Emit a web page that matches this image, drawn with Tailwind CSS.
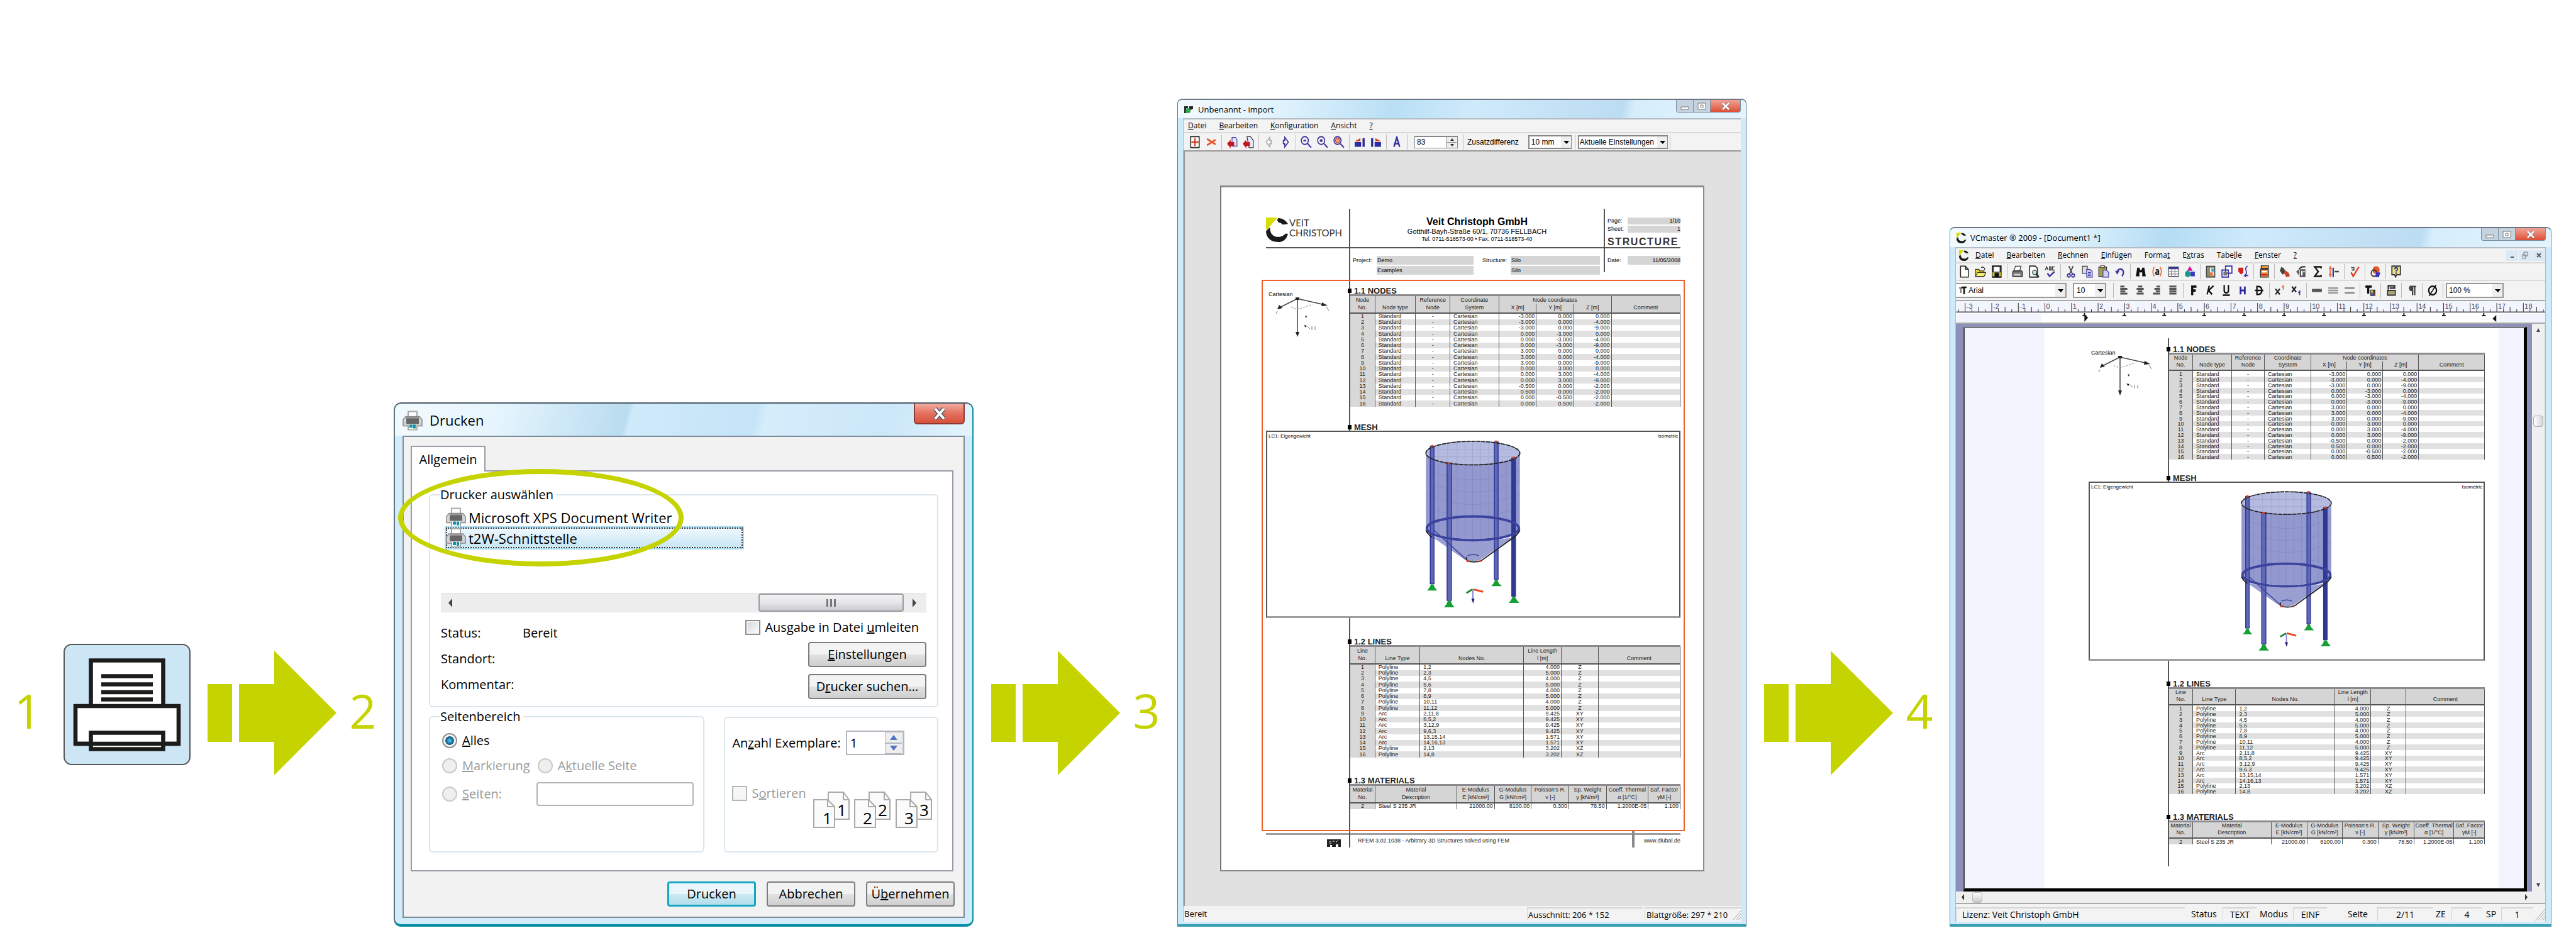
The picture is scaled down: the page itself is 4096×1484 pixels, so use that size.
<!DOCTYPE html>
<html lang="de">
<head>
  <meta charset="UTF-8" />
  <meta name="viewport" content="width=device-width, initial-scale=1.0"/>
  <title>VCmaster - Drucken über t2W-Schnittstelle</title>
  <script src="https://cdn.jsdelivr.net/npm/@tailwindcss/browser@4"></script>
</head>
<body class="bg-white text-black font-['Open_Sans','Noto_Sans',sans-serif]">

  <!-- shared symbols -->
  <svg class="hidden" aria-hidden="true">
    <symbol id="pfeil" viewBox="0 0 205 198"><path fill="#c5d300" d="M0 53h39v92H0zM50 53h56V0l99 99-99 99v-53H50z"/></symbol>
    <symbol id="drucker" viewBox="0 0 32 31">
      <path fill="#fff" stroke="#aaa" stroke-width="2" d="M9 1h14v12H9zM9 21h14v9H9z"/>
      <path fill="#d5d5d5" stroke="#888" stroke-width="1.5" d="M5 9h22l4 5v10H1V14z"/>
      <path fill="#666" d="M6 9h20v12H6z"/><path fill="#999" d="M6 9h20v3H6z"/>
      <path fill="#fff" d="M10 22h12v7H10z"/><path fill="#0e93a8" d="M11 22h5v5h-5zM17 22h4v6h-4z"/>
    </symbol>
    <symbol id="logo" viewBox="0 0 34 38">
      <path fill="#d9dc00" d="M0 0h18l-8 9L1 19H0z"/>
      <path fill="#1a1a18" d="M19 1c7 0 12 4 15 9l-8 1c-2-2-4-3-6-3l-3-4zM0 21l6-6c0 10 5 15 13 15 6 0 9-3 11-5h4c-2 9-8 13-15 13C7 38 0 31 0 21z"/>
    </symbol>
    <symbol id="silo" viewBox="0 0 662 296">
      <path fill="#6f77bd" fill-opacity=".75" d="M255 34v121a76 19 0 0 0 151 0V34a76 19 0 0 1-151 0z"/>
      <ellipse cx="330.500" cy="34" rx="75.500" ry="19" fill="#b4bae0"/>
      <path fill="none" stroke="#a3a9cf" d="M275 22v26M290 19v30M305 17v34M318 15v37M330 15v38M343 15v37M356 17v34M372 19v30M270 28h120M262 40h136"/>
      <path fill="none" stroke="#858cc4" d="M275 50v120M290 52v122M305 53v122M318 53v122M330 53v122M343 53v122M356 53v122M384 50v120M256 60q75 34 150 0M256 80q75 34 150 0M256 100q75 34 150 0M256 120q75 34 150 0"/>
      <path fill="#7f87c6" fill-opacity=".8" d="M264 168l54 38q12 4 24 0l54-37q-65 14-132-1z"/>
      <g fill="#6168b6" stroke="#2f3796" stroke-width="1.500">
        <path d="M262 23h6v221h-6zM365 16h6v221h-6z"/>
        <path d="M289 50h7v221h-7z"/><path fill="#2f3a93" d="M393 42h6v222h-6z"/>
      </g>
      <ellipse cx="330.500" cy="155" rx="74" ry="19" fill="none" stroke="#3c439f" stroke-width="4"/>
      <ellipse cx="330.500" cy="34" rx="75.500" ry="19" fill="none" stroke="#222" stroke-width="1.800" stroke-dasharray="7 1"/>
      <path fill="none" stroke="#3c439f" stroke-width="1.500" d="M268 158l24 22 28 25M322 199q9-4 18 0"/>
      <path fill="none" stroke="#222" stroke-width="1.800" d="M255 158q3 7 10 11M406 158q-3 7-12 13l-50 36q-12 4-23 0l-1-6"/>
      <path fill="#e23c1c" d="M263 21h4v3h-4zM366 14h4v3h-4zM394 40h4v3h-4zM290 49h4v3h-4zM320 206h4v3h-4zM341 206h3v3h-3z"/>
      <path fill="#17a035" d="M263 245h4l2 5 4 5h-16l4-5zM290 272h5l2 5 4 5h-17l4-5zM366 238h4l2 5 5 5h-17l4-5zM394 265h4l3 5 4 5h-17l4-5z"/>
      <path fill="none" stroke="#e8481c" stroke-width="3" d="M331 253l16 4"/><path fill="none" stroke="#178a35" stroke-width="3" d="M330 253l-10 6"/>
      <path fill="none" stroke="#8d86d6" stroke-width="2" d="M330.500 254v18"/><path fill="#1d1a6a" d="M328 268h5l-2 8z"/>
    </symbol>
    <symbol id="achsen" viewBox="0 0 100 64">
      <path fill="none" stroke="#444" stroke-width="1.500" d="M42 2v56M42 2L14 16M42 2l44 10"/>
      <path fill="#222" d="M39 0h6v4h-6zM10 19l3-7 5 5zM90 13l-9-5-1 6zM42 63l-3-8h6zM52 44l5 1-2 3zM54 30l3-1-1 4z"/>
      <path fill="none" stroke="#888" stroke-dasharray="3 2" d="M32 15q8 6 20 1t14-4"/>
      <path fill="none" stroke="#777" d="M10 22l-2 4M88 15l4 6M58 46l4 4M65 46v6M70 46v6"/>
    </symbol>

    <symbol id="i-tabelle" viewBox="0 0 16 16"><path fill="#fff" stroke="#333" stroke-width="1.500" d="M2 1h12v14H2z"/><path stroke="#d3421c" stroke-width="2" d="M8 3v10M3 8h10"/></symbol>
    <symbol id="i-schere-rot" viewBox="0 0 16 16"><path fill="none" stroke="#e4572a" stroke-width="2.500" d="M2 4l7 4 5-3M2 12l7-4 5 3"/></symbol>
    <symbol id="i-import" viewBox="0 0 16 16"><path fill="#e9e9ff" stroke="#3a35a0" d="M8 2h5l2 3v8H8z"/><path fill="#c4161c" d="M1 10l5-5v3h5v5H6v3z"/></symbol>
    <symbol id="i-import2" viewBox="0 0 16 16"><path fill="#e9e9ff" stroke="#333" d="M6 1h5l4 5v9H9z"/><path fill="#c4161c" d="M0 10l5-5v3h5v5H5v3z"/></symbol>
    <symbol id="i-zurueck" viewBox="0 0 16 16"><path fill="#fff" stroke="#aaa" stroke-width="1.500" d="M4 8l5-6v4h2v4H9v4z"/></symbol>
    <symbol id="i-vor" viewBox="0 0 16 16"><path fill="#fff" stroke="#3a35a0" stroke-width="1.500" d="M12 8L7 2v4H5v4h2v4z"/></symbol>
    <symbol id="i-lupe-minus" viewBox="0 0 16 16"><path fill="none" stroke="#3a35a0" stroke-width="1.800" d="M10 10l5 5M4 6h4"/><circle cx="6" cy="6" r="5" fill="none" stroke="#3a35a0" stroke-width="1.500"/></symbol>
    <symbol id="i-lupe-plus" viewBox="0 0 16 16"><path fill="none" stroke="#3a35a0" stroke-width="1.800" d="M10 10l5 5M4 6h4M6 4v4"/><circle cx="6" cy="6" r="5" fill="none" stroke="#3a35a0" stroke-width="1.500"/></symbol>
    <symbol id="i-lupe-rot" viewBox="0 0 16 16"><path fill="none" stroke="#3a35a0" stroke-width="1.800" d="M10 10l5 5"/><circle cx="6" cy="6" r="5" fill="none" stroke="#3a35a0" stroke-width="1.500"/><circle cx="6" cy="6" r="3" fill="#f0a080" stroke="#e4572a" stroke-width="1.500"/></symbol>
    <symbol id="i-haus1" viewBox="0 0 16 16"><path fill="#2c2ba0" d="M1 8h9v6H1zM12 3h3v11h-3z"/><path fill="#d3421c" d="M1 7l8-4v4z"/></symbol>
    <symbol id="i-haus2" viewBox="0 0 16 16"><path fill="#2c2ba0" d="M1 3h3v11H1zM6 8h9v6H6z"/><path fill="#d3421c" d="M15 7L7 3v4z"/></symbol>
    <symbol id="i-a" viewBox="0 0 16 16"><path fill="none" stroke="#2c2ba0" stroke-width="2" d="M4 14L8 2l4 12M5 10h6"/></symbol>

    <symbol id="i-neu" viewBox="0 0 16 16"><path fill="#fff" stroke="#222" stroke-width="1.300" d="M3 1h7l4 4v10H3zM10 1v4h4"/></symbol>
    <symbol id="i-oeffnen" viewBox="0 0 16 16"><path fill="#e8d52a" stroke="#333" d="M1 5h5l1 2h6v7H1z"/><path fill="#f6ef6a" stroke="#333" d="M4 9h12l-3 5H1z"/><path fill="none" stroke="#222" d="M9 3q3-2 5 1v2"/></symbol>
    <symbol id="i-speichern" viewBox="0 0 16 16"><path fill="#555" stroke="#111" stroke-width="1.500" d="M2 1h12v14H2z"/><path fill="#fff" d="M4 2h8v6H4z"/><path fill="#c9c52a" d="M2 9h3v5H2zM11 9h3v5h-3z"/><path fill="#111" d="M5 10h6v5H5z"/></symbol>
    <symbol id="i-drucken" viewBox="0 0 16 16"><path fill="#fff" stroke="#333" d="M5 1h8l-2 6H3z"/><path fill="#777" stroke="#222" d="M2 7h12l1 2v5H1V9z"/><path fill="#ddd" d="M3 11h9v2H3z"/></symbol>
    <symbol id="i-vorschau" viewBox="0 0 16 16"><path fill="#fff" stroke="#333" stroke-width="1.500" d="M2 1h8l3 3v11H2z"/><circle cx="9" cy="9" r="3" fill="#bfe6e6" stroke="#333"/><path stroke="#222" stroke-width="2" d="M11 11l4 4"/></symbol>
    <symbol id="i-abc" viewBox="0 0 16 16"><path fill="none" stroke="#333" stroke-width="1.300" d="M1 6l2-4 2 4M7 2v4h2V2zM14 2h-3v4h3"/><path fill="none" stroke="#3a35a0" stroke-width="2" d="M4 10l3 4 7-6"/></symbol>
    <symbol id="i-schere" viewBox="0 0 16 16"><path fill="none" stroke="#444" stroke-width="1.500" d="M5 1l5 10M11 1L6 11"/><circle cx="5" cy="13" r="2" fill="none" stroke="#3a35a0" stroke-width="1.500"/><circle cx="11" cy="13" r="2" fill="none" stroke="#3a35a0" stroke-width="1.500"/></symbol>
    <symbol id="i-kopieren" viewBox="0 0 16 16"><path fill="#ddd" stroke="#333" d="M1 1h7v9H1z"/><path fill="#cfd0f5" stroke="#3a35a0" d="M7 5h5l3 3v7H7z"/><path stroke="#3a35a0" d="M9 9h4M9 11h4M9 13h4"/></symbol>
    <symbol id="i-einfuegen" viewBox="0 0 16 16"><path fill="#a9a14a" stroke="#333" d="M1 2h11v12H1z"/><path fill="#eee" stroke="#333" d="M4 0h5v3H4z"/><path fill="#cfd0f5" stroke="#3a35a0" d="M7 6h5l3 3v6H7z"/></symbol>
    <symbol id="i-undo" viewBox="0 0 16 16"><path fill="none" stroke="#3a35a0" stroke-width="2" d="M4 9q1-5 6-4 5 2 1 9"/><path fill="#3a35a0" d="M1 7h6l-3 5z"/></symbol>
    <symbol id="i-fernglas" viewBox="0 0 16 16"><path fill="#111" d="M3 3h3l1 3h2l1-3h3l2 11h-5V9H6v5H1z"/></symbol>
    <symbol id="i-a-klammer" viewBox="0 0 16 16"><path fill="none" stroke="#e8703a" stroke-width="1.500" d="M4 2q-4 6 0 12M12 2q4 6 0 12"/><path fill="none" stroke="#222" stroke-width="1.800" d="M6 6q4-1 4 1v5M10 8q-4 0-4 2t4 1"/></symbol>
    <symbol id="i-gitter" viewBox="0 0 16 16"><path fill="#fff" stroke="#444" d="M1 2h14v12H1z"/><path fill="#3a3a90" d="M1 2h14v3H1z"/><path stroke="#888" d="M5 5v9M10 5v9M1 8h14M1 11h14"/></symbol>
    <symbol id="i-formen" viewBox="0 0 16 16"><path fill="#d6129a" d="M8 1l4 6H4z"/><circle cx="5" cy="11" r="4" fill="#169a8a"/><path fill="#3a35c0" d="M9 8h6v6H9z"/></symbol>
    <symbol id="i-rahmen" viewBox="0 0 16 16"><path fill="#8a8a6a" stroke="#333" d="M2 1h12v14H2z"/><path fill="#eee" d="M7 3h6v10H7z"/><path fill="#38b4c4" d="M9 4h4v4H9z"/><path fill="#e8703a" d="M7 9h4v4H7z"/></symbol>
    <symbol id="i-fenster" viewBox="0 0 16 16"><path fill="#fff" stroke="#3a35a0" stroke-width="1.500" d="M6 1h9v9H6zM1 6h9v9H1z"/><path fill="#777" d="M3 8h5v5H3z"/></symbol>
    <symbol id="i-herz" viewBox="0 0 16 16"><path fill="#d3201c" d="M1 3h7v6l-3 3-4-4z"/><path fill="none" stroke="#3a35a0" stroke-width="1.500" d="M14 1q-4 2-2 6 2 3-2 6h5M11 11v4"/></symbol>
    <symbol id="i-rechner" viewBox="0 0 16 16"><path fill="#e8943a" stroke="#333" stroke-width="1.300" d="M4 0h10v4H4zM3 5h11v10H3z"/><path fill="#fff" d="M5 7h7v2H5z"/><path stroke="#d3201c" stroke-width="2" d="M4 12h9"/></symbol>
    <symbol id="i-pinsel" viewBox="0 0 16 16"><path fill="#444" d="M3 2l4 2 2 5-4 3-4-5z"/><path fill="#c4452a" d="M8 6l6 4 1 4-5 1-3-5z"/></symbol>
    <symbol id="i-stapel" viewBox="0 0 16 16"><path fill="#555" d="M1 8l4-3v8zM6 5h8v10H6z"/><path fill="#fff" d="M8 7h2v6H8zM11 7h2v2h-2z"/><path fill="none" stroke="#222" stroke-width="1.500" d="M5 5q3-4 9-3"/></symbol>
    <symbol id="i-summe" viewBox="0 0 16 16"><path fill="none" stroke="#111" stroke-width="2" d="M13 4V2H4l5 6-5 6h9v-2"/></symbol>
    <symbol id="i-wurzel" viewBox="0 0 16 16"><path stroke="#e8703a" stroke-width="2" d="M3 1v14M1 4h4M1 12h4"/><path stroke="#3a35a0" stroke-width="2" d="M7 3v12"/><path stroke="#444" stroke-width="2" d="M9 8h6"/></symbol>
    <symbol id="i-haken" viewBox="0 0 16 16"><path fill="none" stroke="#e23c1c" stroke-width="2" d="M3 9l3 5 8-12"/><path fill="none" stroke="#555" stroke-width="1.500" d="M3 3h4v3H4"/></symbol>
    <symbol id="i-kugel" viewBox="0 0 16 16"><circle cx="9" cy="6" r="5" fill="#e8562a"/><circle cx="6" cy="10" r="4" fill="none" stroke="#333" stroke-width="1.500"/><path fill="#3a35c0" d="M9 9h6l-2 6H8z"/></symbol>
    <symbol id="i-hilfe" viewBox="0 0 16 16"><path fill="#e6df7a" stroke="#333" stroke-width="1.500" d="M2 1h12v11H9l-2 3-1-3H2z"/><path fill="none" stroke="#2c2ba0" stroke-width="1.500" d="M6 5q0-2 2-2t2 2q0 1-2 2v1M8 9v2"/></symbol>

    <symbol id="i-links" viewBox="0 0 16 16"><path stroke="#555" stroke-width="2.500" d="M3 3h6M3 6h10M3 9h7M3 12h10"/></symbol>
    <symbol id="i-mitte" viewBox="0 0 16 16"><path stroke="#555" stroke-width="2.500" d="M5 3h6M3 6h10M5 9h6M3 12h10"/></symbol>
    <symbol id="i-rechts" viewBox="0 0 16 16"><path stroke="#555" stroke-width="2.500" d="M8 3h5M5 6h8M7 9h6M3 12h10"/></symbol>
    <symbol id="i-block" viewBox="0 0 16 16"><path stroke="#555" stroke-width="2.500" d="M3 3h10M3 6h10M3 9h10M3 12h10"/></symbol>
    <symbol id="i-fett" viewBox="0 0 16 16"><path fill="none" stroke="#111" stroke-width="3" d="M6 14V3h6M6 8h5"/></symbol>
    <symbol id="i-kursiv" viewBox="0 0 16 16"><path fill="none" stroke="#111" stroke-width="2" d="M7 2L4 13M13 2L6 8l5 5"/></symbol>
    <symbol id="i-unter" viewBox="0 0 16 16"><path fill="none" stroke="#111" stroke-width="2" d="M5 1v7q0 3 3 3t3-3V1M3 14h10"/></symbol>
    <symbol id="i-h" viewBox="0 0 16 16"><path fill="none" stroke="#2c2ba0" stroke-width="2.500" d="M5 3v10M11 3v10M5 8h6"/></symbol>
    <symbol id="i-durch" viewBox="0 0 16 16"><path fill="none" stroke="#111" stroke-width="2" d="M5 3v10h3q4-1 4-5T8 3zM2 8h12"/></symbol>
    <symbol id="i-hoch" viewBox="0 0 16 16"><path stroke="#222" stroke-width="2" d="M2 6l6 7M8 6l-6 7"/><path fill="none" stroke="#e8703a" stroke-width="1.500" d="M11 4l2-2v5"/></symbol>
    <symbol id="i-tief" viewBox="0 0 16 16"><path stroke="#222" stroke-width="2" d="M2 3l6 7M8 3l-6 7"/><path fill="none" stroke="#3a35a0" stroke-width="1.500" d="M11 11l2-2v5"/></symbol>
    <symbol id="i-linie1" viewBox="0 0 16 16"><path stroke="#555" stroke-width="4" d="M1 8h14"/></symbol>
    <symbol id="i-linie2" viewBox="0 0 16 16"><path stroke="#999" stroke-width="2" d="M1 5h14M1 8h14M1 11h14"/></symbol>
    <symbol id="i-linie3" viewBox="0 0 16 16"><path stroke="#888" stroke-width="2" d="M1 5h14M1 11h14"/></symbol>
    <symbol id="i-farbe" viewBox="0 0 16 16"><path fill="none" stroke="#111" stroke-width="3" d="M1 3h9M5 3v9"/><path fill="#333" d="M8 7h7v8H8z"/><path fill="#e8c52a" d="M9 8h3v3H9z"/><path fill="#d3201c" d="M12 11h2v3h-2z"/><path fill="#2a6ad0" d="M9 11h3v3H9z"/></symbol>
    <symbol id="i-ordner" viewBox="0 0 16 16"><path fill="#a9a47a" stroke="#333" stroke-width="1.500" d="M3 8h11v6H3z"/><path fill="none" stroke="#333" stroke-width="2" d="M4 7V2h9v4M6 5h7"/></symbol>
    <symbol id="i-absatz" viewBox="0 0 16 16"><path fill="#444" d="M8 2h6v2h-1v10h-2V4h-1v10H8V9Q4 9 4 5t4-3z"/></symbol>
    <symbol id="i-leer" viewBox="0 0 16 16"><circle cx="8" cy="8" r="5.500" fill="none" stroke="#111" stroke-width="2"/><path stroke="#111" stroke-width="1.500" d="M3 15L13 1"/></symbol>
  </svg>

  <main class="min-h-screen flex items-end pl-[22px] pr-[39px] pb-[10px]">

    <!-- Schritt 1 -->
    <p class="w-11 shrink-0 mb-[304px] text-center text-[75px] leading-[80px] text-[#c5d300]">1</p>
    <svg class="ml-[35px] mb-[257px] w-[202px] h-[193px] shrink-0" viewBox="0 0 202 193" role="img" aria-label="Drucker">
      <rect x="1" y="1" width="200" height="191" rx="12" fill="#cde6f5" stroke="#575756" stroke-width="2"/>
      <g fill="#fff" stroke="#1c1c1a" stroke-width="6.600">
        <path d="M43.500 26.500h115v90h-115z"/>
        <path d="M19 99h164v60H19z"/>
        <path d="M43.500 141.500h115v26h-115z"/>
        <path fill="none" d="M19 159h164"/>
        <path d="M60 51.500h82M60 64.500h82M60 77h82M60 88.500h82"/>
      </g>
    </svg>
    <svg class="ml-[27px] mb-[241px] w-[205px] h-[198px] shrink-0"><use href="#pfeil"/></svg>

    <!-- Schritt 2: Druckdialog -->
    <p class="w-11 shrink-0 ml-5 mr-[27px] mb-[304px] text-center text-[75px] leading-[80px] text-[#c5d300]">2</p>
    <section class="relative flex-[1_1_922px] rounded-xl border-2 border-t-[#4a5a68] border-l-[#5d7484] border-r-[#0e8fa6] border-b-4 border-b-[#0a8ea6] bg-[#d3ecfb] px-3 pb-[10px] text-[20px] leading-[30px]">
      <header class="-mx-3 h-[51px] rounded-t-[10px] flex items-start bg-[linear-gradient(105deg,#f2fafe_0%,#e6f5fd_18%,#b9dcf0_40%,#cfeafb_41%,#c5e4f7_62%,#d6edfb_64%,#cbe7f8_85%,#e4f4fd_100%)]">
        <svg class="w-8 h-8 ml-3 mt-[11px]"><use href="#drucker"/></svg>
        <h2 class="ml-[11px] mt-[11px] text-[22px]">Drucken</h2>
        <button aria-label="Schließen" class="ml-auto mr-3 w-[81px] h-[33px] rounded-b-md border-2 border-t-0 border-[#8b3a34] flex items-center justify-center bg-linear-to-b from-[#f3aba0] via-[#e2715f] to-[#d8503a]">
          <svg class="w-6 h-5" viewBox="0 0 24 20"><path stroke="#555a66" stroke-width="7" d="M5 2l14 16M19 2L5 18"/><path stroke="#fff" stroke-width="4" d="M5 2l14 16M19 2L5 18"/></svg>
        </button>
      </header>
      <div class="border-2 border-[#7d8b98] bg-[#f2f2f2] pt-[14px] pl-[11px] pr-[14px] pb-4">
        <div class="flex"><button role="tab" class="relative -mb-[2px] w-[119px] h-[41px] bg-white border-2 border-b-0 border-[#999ca6] text-[20px]">Allgemein</button></div>
        <form class="mr-[2px] bg-white border-2 border-[#999ca6] pt-[22px] pl-[27px] pr-[22px] pb-[28px]" onsubmit="return false">
          <fieldset class="rounded-md border-2 border-[#dbe6ec] px-[17px] pb-[11px]">
            <legend class="-ml-[1px] px-0 pr-1">Drucker auswählen</legend>
            <ul class="h-[141px] pt-[5px] pl-2 text-[22px]">
              <li class="flex items-center h-[32px]"><svg class="w-8 h-8"><use href="#drucker"/></svg><span class="ml-1">Microsoft XPS Document Writer</span></li>
              <li class="flex items-center h-[33px] w-[472px] border-2 border-dotted border-[#333] outline-2 outline-[#a8dcf0] bg-linear-to-b from-[#eef7fd] to-[#c9e6f5]"><svg class="w-8 h-[31px] -ml-[2px]"><use href="#drucker"/></svg><span class="ml-1">t2W-Schnittstelle</span></li>
            </ul>
            <div class="h-[31px] flex items-center bg-[#ededed] border-y border-[#e0e0e0]">
              <svg class="w-3 h-4 ml-2" viewBox="0 0 12 16"><path fill="#444" d="M10 1v14L4 8z"/></svg>
              <div class="ml-auto w-[231px] h-[29px] rounded-sm border-2 border-[#999ba0] bg-linear-to-b from-[#f3f3f3] via-[#e6e6e9] to-[#c9cbd1] flex items-center justify-center gap-[3px]">
                <i class="w-[3px] h-3 bg-[#777]"></i><i class="w-[3px] h-3 bg-[#777]"></i><i class="w-[3px] h-3 bg-[#777]"></i>
              </div>
              <svg class="w-3 h-4 mx-3" viewBox="0 0 12 16"><path fill="#444" d="M2 1v14l6-7z"/></svg>
            </div>
            <div class="mt-3 flex justify-between">
              <dl class="grid grid-cols-[130px_1fr] auto-rows-[41px] leading-[41px]">
                <dt>Status:</dt><dd>Bereit</dd>
                <dt>Standort:</dt><dd></dd>
                <dt>Kommentar:</dt><dd></dd>
              </dl>
              <div class="flex flex-col items-end gap-[11px]">
                <label class="mr-3 h-6 flex items-center gap-[7px]"><input type="checkbox" class="appearance-none w-6 h-6 border-2 border-[#8e8f8f] bg-linear-to-br from-[#cdd3da] to-white shadow-[inset_0_0_0_2px_#f4f4f4]"><span>Ausgabe in Datei <u>u</u>mleiten</span></label>
                <button class="w-[188px] h-10 rounded border-2 border-[#7d7d7d] bg-linear-to-b from-[#f3f3f3] from-50% via-[#e2e2e2] via-50% to-[#cfcfcf]"><u>E</u>instellungen</button>
                <button class="w-[188px] h-10 rounded border-2 border-[#7d7d7d] bg-linear-to-b from-[#f3f3f3] from-50% via-[#e2e2e2] via-50% to-[#cfcfcf]">D<u>r</u>ucker suchen...</button>
              </div>
            </div>
          </fieldset>

          <div class="flex items-start gap-[31px]">
            <fieldset class="flex-[435_1_0%] h-[231px] rounded-md border-2 border-[#dbe6ec] pl-[19px] pr-[15px] pt-2">
              <legend class="-ml-[3px] pr-1">Seitenbereich</legend>
              <label class="flex items-center gap-2 h-[30px]"><input type="radio" name="bereich" checked class="appearance-none w-6 h-6 rounded-full border-2 border-[#8e8f8f] bg-[radial-gradient(circle,#3db5dd_12%,#0b5578_45%,#f4f4f4_52%)]"><span><u>A</u>lles</span></label>
              <div class="mt-[10px] flex gap-3 text-[#9a9a9a]">
                <label class="flex items-center gap-2 h-[30px]"><input type="radio" name="bereich" disabled class="appearance-none w-6 h-6 rounded-full border-2 border-[#c9c9c9] bg-[#efefef]"><span><u>M</u>arkierung</span></label>
                <label class="flex items-center gap-2 h-[30px]"><input type="radio" name="bereich" disabled class="appearance-none w-6 h-6 rounded-full border-2 border-[#c9c9c9] bg-[#efefef]"><span>A<u>k</u>tuelle Seite</span></label>
              </div>
              <div class="mt-[11px] flex items-center text-[#9a9a9a]">
                <label class="flex items-center gap-2"><input type="radio" name="bereich" disabled class="appearance-none w-6 h-6 rounded-full border-2 border-[#c9c9c9] bg-[#efefef]"><span><u>S</u>eiten:</span></label>
                <input type="text" aria-label="Seiten" class="ml-auto w-[250px] h-[38px] rounded-sm border-2 border-[#b4b4b4] bg-white">
              </div>
            </fieldset>
            <fieldset class="mt-[15px] flex-[345_1_0%] h-[216px] rounded-md border-2 border-[#dbe6ec] pl-[11px] pr-2 pt-5">
              <div class="flex items-center h-[39px]">
                <label for="anzahl">An<u>z</u>ahl Exemplare:</label>
                <div class="ml-2 w-[93px] h-[39px] flex border-2 border-[#b4b7be]">
                  <input id="anzahl" type="text" value="1" class="w-[60px] pl-[5px]">
                  <span class="w-7 flex flex-col bg-[#b4b7be] gap-[2px] p-[1px]">
                    <button aria-label="Mehr" class="flex-1 bg-[#eee] flex items-center justify-center"><svg class="w-3 h-2" viewBox="0 0 12 8"><path fill="#4d73c4" d="M6 0l6 8H0z"/></svg></button>
                    <button aria-label="Weniger" class="flex-1 bg-[#eee] flex items-center justify-center"><svg class="w-3 h-2" viewBox="0 0 12 8"><path fill="#4d73c4" d="M6 8L0 0h12z"/></svg></button>
                  </span>
                </div>
              </div>
              <div class="mt-[46px] flex items-start">
                <label class="flex items-center gap-[7px] text-[#9a9a9a]"><input type="checkbox" disabled class="appearance-none w-6 h-6 border-2 border-[#b6b6b6] bg-[#f6f6f6]"><span>S<u>o</u>rtieren</span></label>
                <svg class="mt-3 ml-auto w-[189px] h-[68px]" viewBox="0 0 189 68" font-size="26">
                  <g id="blatt" fill="#fbfbfb" stroke="#aaa" stroke-width="2"><path d="M24 1h24l9 12v31H24z"/><path d="M1 13h22l11 11v33H1z"/><path fill="none" d="M48 1v12h9M23 13v11h11"/></g>
                  <use href="#blatt" x="65"/><use href="#blatt" x="131"/>
                  <text x="15" y="52">1</text><text x="38" y="39">1</text>
                  <text x="79" y="52">2</text><text x="103" y="39">2</text>
                  <text x="145" y="52">3</text><text x="169" y="39">3</text>
                </svg>
              </div>
            </fieldset>
          </div>
        </form>
        <div class="mt-4 flex justify-end gap-[17px]">
          <button class="w-[141px] h-10 rounded border-[3px] border-[#12a5c4] bg-linear-to-b from-[#eaf6fb] from-50% via-[#cdeaf4] via-50% to-[#b2deec]">Drucken</button>
          <button class="w-[141px] h-10 rounded border-2 border-[#7d7d7d] bg-linear-to-b from-[#f3f3f3] from-50% via-[#e2e2e2] via-50% to-[#cfcfcf]">Abbrechen</button>
          <button class="w-[141px] h-10 rounded border-2 border-[#7d7d7d] bg-linear-to-b from-[#f3f3f3] from-50% via-[#e2e2e2] via-50% to-[#cfcfcf]">Ü<u>b</u>ernehmen</button>
        </div>
      </div>
      <!-- Markierung -->
      <div class="absolute left-[5px] top-[104px] w-[454px] h-[155px] rounded-[50%] border-8 border-[#c5d300]"></div>
    </section>
    <svg class="ml-7 mb-[241px] w-[205px] h-[198px] shrink-0"><use href="#pfeil"/></svg>

    <!-- Schritt 3: Importfenster -->
    <p class="w-11 shrink-0 ml-5 mr-[27px] mb-[304px] text-center text-[75px] leading-[80px] text-[#c5d300]">3</p>
    <section class="flex-[1_1_905px] rounded-t-lg border border-t-2 border-[#5d7484] border-t-[#6b7681] border-b-4 border-b-[#3b9fb2] bg-[#cfeafb] px-2 pb-1 text-[13px]">
      <header class="-mx-2 h-[29px] flex items-center rounded-t-md bg-[linear-gradient(105deg,#f2fafe_0%,#e0f3fd_18%,#b9dff5_38%,#cfeafb_52%,#bcdcf2_78%,#d6edfb_80%,#e4f4fd_100%)]">
        <svg class="ml-[9px] w-4 h-4" viewBox="0 0 16 16"><path fill="#222" d="M1 3h6v3H4v8H1zM9 3h6v4l-4 2H9z"/><circle cx="7" cy="10" r="4" fill="#2fa84a"/></svg>
        <h2 class="ml-[7px] leading-5">Unbenannt - import</h2>
        <div class="ml-auto mr-2 self-start flex h-5 w-[103px] rounded-b border border-t-0 border-[#7d8ea0] overflow-hidden">
          <button aria-label="Minimieren" class="flex-1 bg-[#c4d3df] border-r border-[#7d8ea0] flex items-center justify-center"><svg class="w-4 h-3" viewBox="0 0 16 12"><path fill="#fff" stroke="#777" d="M2 7h12v4H2z"/></svg></button>
          <button aria-label="Maximieren" class="flex-1 bg-[#c4d3df] border-r border-[#7d8ea0] flex items-center justify-center"><svg class="w-4 h-3" viewBox="0 0 16 12"><path fill="#fff" stroke="#777" d="M2 1h12v10H2zM6 4h4v4H6z"/></svg></button>
          <button aria-label="Schließen" class="w-[47px] bg-linear-to-b from-[#f0a295] to-[#dd4c34] flex items-center justify-center"><svg class="w-4 h-3" viewBox="0 0 16 12"><path stroke="#777" stroke-width="4" d="M3 1l10 10M13 1L3 11"/><path stroke="#fff" stroke-width="2.500" d="M3 1l10 10M13 1L3 11"/></svg></button>
        </div>
      </header>
      <div class="border-t-2 border-l border-[#b3bcc4] bg-[#f3f3f3]">
        <nav class="h-[22px] pl-[7px] flex items-center gap-5 text-[12px] border-b-2 border-[#dadada]">
          <a href="#"><u>D</u>atei</a><a href="#"><u>B</u>earbeiten</a><a href="#"><u>K</u>onfiguration</a><a href="#"><u>A</u>nsicht</a><a href="#"><u>?</u></a>
        </nav>
        <div class="h-[27px] pl-[5px] flex items-center font-['Liberation_Sans',sans-serif] text-[12px]">
          <div id="leiste-import" class="flex items-center"></div>
          <div class="ml-2 w-[69px] h-5 flex border border-t-2 border-[#888] bg-white">
            <input type="text" value="83" aria-label="Zoom" class="w-[50px] pl-[3px]">
            <span class="w-4 flex flex-col gap-[1px] bg-[#888] border-l border-[#888]"><button aria-label="Größer" class="flex-1 bg-[#eee] flex items-center justify-center"><svg class="w-2 h-1" viewBox="0 0 8 4"><path fill="#333" d="M4 0l3 4H1z"/></svg></button><button aria-label="Kleiner" class="flex-1 bg-[#eee] flex items-center justify-center"><svg class="w-2 h-1" viewBox="0 0 8 4"><path fill="#333" d="M4 4L1 0h6z"/></svg></button></span>
          </div>
          <i class="ml-2 w-px h-6 bg-[#bbb]"></i>
          <label for="differenz" class="ml-[6px]">Zusatzdifferenz</label>
          <div class="relative ml-[15px]">
            <select id="differenz" class="appearance-none block w-[69px] h-[22px] pl-[3px] border-2 border-r border-[#888] bg-white"><option>10 mm</option></select>
            <svg class="absolute right-[1px] top-[2px] w-4 h-[18px] bg-[#eee] pointer-events-none" viewBox="0 0 16 18"><path fill="#000" d="M4 7h9l-4 5z"/></svg>
          </div>
          <i class="ml-[5px] w-px h-6 bg-[#bbb]"></i>
          <div class="relative ml-1">
            <select aria-label="Einstellungen" class="appearance-none block w-[143px] h-[22px] pl-[1px] border-2 border-r border-[#888] bg-white"><option>Aktuelle Einstellungen</option></select>
            <svg class="absolute right-[1px] top-[2px] w-4 h-[18px] bg-[#eee] pointer-events-none" viewBox="0 0 16 18"><path fill="#000" d="M4 7h9l-4 5z"/></svg>
          </div>
          <i class="ml-[3px] w-px h-6 bg-[#bbb]"></i>
        </div>
        <div class="border-t-2 border-l-2 border-[#989898] bg-[#e1e1e1] pt-[54px] pb-[55px] pl-[56px] pr-[58px]">
          <article class="bg-white border-2 border-t-[3px] border-[#8a8a8c] border-l-[#777] pt-[34px] pb-[36px] pl-[71px] pr-[36px] font-['Liberation_Sans',sans-serif]">
            <div class="h-[63px] border-b-2 border-[#555] grid grid-cols-[132px_1fr_122px]">
              <div class="pt-[14px] flex gap-[2px]">
                <svg class="w-[35px] h-[39px]"><use href="#logo"/></svg>
                <p class="font-['Lato',sans-serif] text-[15px] leading-[16px] text-[#333]">VEIT<br>CHRISTOPH</p>
              </div>
              <div class="border-l-2 border-[#555] pt-[12px] text-center">
                <h3 class="font-bold text-[16px] leading-[18px]">Veit Christoph GmbH</h3>
                <p class="text-[11px] leading-[13px]">Gotthilf-Bayh-Straße 60/1, 70736 FELLBACH</p>
                <p class="text-[9px] leading-[11px]">Tel: 0711-518573-00 • Fax: 0711-518573-40</p>
              </div>
              <div class="border-l-2 border-[#555] pt-[14px] pl-1 text-[9px]">
                <div class="flex justify-between leading-[11px]">Page: <span class="w-[84px] bg-[#d5d5d5] text-right">1/10</span></div>
                <div class="mt-[2px] flex justify-between leading-[11px]">Sheet: <span class="w-[84px] bg-[#d5d5d5] text-right">1</span></div>
                <p class="mt-[5px] text-[16px] leading-[20px] font-bold tracking-widest text-[#333]">STRUCTURE</p>
              </div>
            </div>
            <div class="h-[50px] grid grid-cols-[132px_1fr_122px] text-[9px] leading-[14px]">
              <div></div>
              <div class="border-l-2 border-[#555] pt-[12px] pl-1 pr-[6px] flex">
                <span class="w-[38px]">Project:</span>
                <div class="w-[154px]"><p class="bg-[#d5d5d5] pl-px">Demo</p><p class="mt-[2px] bg-[#d5d5d5] pl-px">Examples</p></div>
                <span class="ml-[14px] w-[45px]">Structure:</span>
                <div class="flex-1"><p class="bg-[#d5d5d5] pl-px">Silo</p><p class="mt-[2px] bg-[#d5d5d5] pl-px">Silo</p></div>
              </div>
              <div class="border-l-2 border-[#555] h-[38px] pt-[12px] pl-1 flex justify-between">Date: <span class="w-[84px] h-[14px] bg-[#d5d5d5] text-right">11/05/2008</span></div>
            </div>
            <div class="-mx-[7px] border-2 border-[#e9632b] px-[5px]">
              <div id="bericht-import"></div>
            </div>
            <div class="flex h-[26px] text-[9px] text-[#222]">
              <div class="w-[132px]"><div class="mt-[3px] h-[3px] bg-[#a09da0]"></div><svg class="ml-[97px] mt-[7px] w-[22px] h-3" viewBox="0 0 22 12"><path fill="#222" d="M0 0h22v12h-4V8h-4v4H8V9H5v3H0z"/><path stroke="#fff" d="M3 4h4M9 3h3M14 5l3-3M4 7h3"/></svg></div>
              <div class="flex-1 border-l-2 border-[#555]"><div class="mt-[3px] h-[3px] bg-[#a09da0]"></div><p class="ml-3 mt-1 leading-[11px]">RFEM 3.02.1038 - Arbitrary 3D Structures solved using FEM</p></div>
              <div class="w-[77px] border-l-4 border-[#8a8a8a]"><div class="mt-[3px] h-[3px] bg-[#a09da0]"></div><p class="mt-1 text-right leading-[11px]">www.dlubal.de</p></div>
            </div>
          </article>
        </div>
        <footer class="h-[25px] flex items-center">
          <span class="pl-px flex-1">Bereit</span>
          <span class="w-[184px] h-[21px] leading-5 border-t-2 border-l border-[#d5d5d5] pl-px">Ausschnitt: 206 * 152</span>
          <span class="ml-[3px] w-[153px] h-[21px] leading-5 border-t-2 border-l border-[#d5d5d5] pl-[2px] flex items-center">Blattgröße: 297 * 210<svg class="ml-auto w-3 h-4" viewBox="0 0 12 16"><path stroke="#aaa" d="M0 16L12 2M4 16l8-9M8 16l4-4"/></svg></span>
        </footer>
      </div>
    </section>
    <svg class="ml-7 mb-[241px] w-[205px] h-[198px] shrink-0"><use href="#pfeil"/></svg>

    <!-- Schritt 4: VCmaster -->
    <p class="w-11 shrink-0 ml-5 mr-[26px] mb-[304px] text-center text-[75px] leading-[80px] text-[#c5d300]">4</p>
    <section class="flex-[1_1_957px] rounded-t-lg border border-t-2 border-[#3f9cb2] border-t-[#6b7681] border-b-4 border-b-[#3b9fb2] bg-[#cfeafb] px-2 pb-1 text-[13px]">
      <header class="-mx-2 h-[30px] flex items-center rounded-t-md bg-[linear-gradient(105deg,#f2fafe_0%,#e0f3fd_20%,#b4dcf4_36%,#cfeafb_50%,#bcdcf2_78%,#d6edfb_80%,#e4f4fd_100%)]">
        <svg class="ml-[9px] w-[17px] h-[17px]"><use href="#logo"/></svg>
        <h2 class="ml-[6px] leading-5">VCmaster ® 2009 - [Document1 *]</h2>
        <div class="ml-auto mr-2 self-start flex h-5 w-[103px] rounded-b border border-t-0 border-[#7d8ea0] overflow-hidden">
          <button aria-label="Minimieren" class="flex-1 bg-[#c4d3df] border-r border-[#7d8ea0] flex items-center justify-center"><svg class="w-4 h-3" viewBox="0 0 16 12"><path fill="#fff" stroke="#777" d="M2 7h12v4H2z"/></svg></button>
          <button aria-label="Maximieren" class="flex-1 bg-[#c4d3df] border-r border-[#7d8ea0] flex items-center justify-center"><svg class="w-4 h-3" viewBox="0 0 16 12"><path fill="#fff" stroke="#777" d="M2 1h12v10H2zM6 4h4v4H6z"/></svg></button>
          <button aria-label="Schließen" class="w-[47px] bg-linear-to-b from-[#f0a295] to-[#dd4c34] flex items-center justify-center"><svg class="w-4 h-3" viewBox="0 0 16 12"><path stroke="#777" stroke-width="4" d="M3 1l10 10M13 1L3 11"/><path stroke="#fff" stroke-width="2.500" d="M3 1l10 10M13 1L3 11"/></svg></button>
        </div>
      </header>
      <div class="border-t-2 border-x border-[#b3bcc4] bg-[#f3f3f3]">
        <nav class="h-[24px] pl-1 flex items-center gap-[20px] text-[12px] border-b-2 border-[#dadada]">
          <svg class="-mr-[10px] w-[17px] h-[17px]"><use href="#logo"/></svg>
          <a href="#"><u>D</u>atei</a><a href="#"><u>B</u>earbeiten</a><a href="#"><u>R</u>echnen</a><a href="#"><u>E</u>infügen</a><a href="#">Forma<u>t</u></a><a href="#">E<u>x</u>tras</a><a href="#">Tabe<u>l</u>le</a><a href="#"><u>F</u>enster</a><a href="#"><u>?</u></a>
          <div class="ml-auto flex w-[63px] h-[17px] gap-px text-[#667]">
            <button aria-label="Minimieren" class="flex-1 bg-[#dbe9f5] flex justify-center items-center"><svg class="w-3 h-3" viewBox="0 0 12 12"><path stroke="#556" stroke-width="2" d="M4 9h5"/></svg></button>
            <button aria-label="Wiederherstellen" class="flex-1 bg-[#dbe9f5] flex justify-center items-center"><svg class="w-3 h-3" viewBox="0 0 12 12"><path fill="none" stroke="#778" d="M4 1h6v6H4zM2 5h5v6H2z"/></svg></button>
            <button aria-label="Schließen" class="flex-1 bg-[#dbe9f5] flex justify-center items-center"><svg class="w-3 h-3" viewBox="0 0 12 12"><path stroke="#556" stroke-width="2" d="M3 3l6 6M9 3l-6 6"/></svg></button>
          </div>
        </nav>
        <div id="leiste-haupt" class="h-[28px] flex items-center border-b-2 border-[#dadada]"></div>
        <div class="h-[30px] flex items-center font-['Liberation_Sans',sans-serif] text-[12px]">
          <div class="relative">
            <select aria-label="Schriftart" class="appearance-none block w-[176px] h-[24px] pl-5 border-2 border-l-0 border-[#999] bg-white"><option>Arial</option></select>
            <svg class="absolute left-1 top-1 w-[14px] h-4 pointer-events-none" viewBox="0 0 14 16"><path fill="none" stroke="#777" stroke-width="2" d="M1 4h7M4 4v8"/><path fill="none" stroke="#111" stroke-width="2.500" d="M5 3h8M9 3v11"/></svg>
            <svg class="absolute right-[2px] top-[2px] w-4 h-5 bg-[#eee] pointer-events-none" viewBox="0 0 16 20"><path fill="#000" d="M4 8h9l-4 5z"/></svg>
          </div>
          <div class="relative ml-[10px]">
            <select aria-label="Schriftgröße" class="appearance-none block w-[53px] h-[24px] pl-1 border-2 border-[#999] bg-white"><option>10</option></select>
            <svg class="absolute right-[2px] top-[2px] w-4 h-5 bg-[#eee] pointer-events-none" viewBox="0 0 16 20"><path fill="#000" d="M4 8h9l-4 5z"/></svg>
          </div>
          <div id="leiste-format" class="ml-2 flex items-center"></div>
          <div class="relative ml-px">
            <select aria-label="Zoom" class="appearance-none block w-[92px] h-[24px] pl-[3px] border-2 border-[#999] bg-white"><option>100 %</option></select>
            <svg class="absolute right-[2px] top-[2px] w-4 h-5 bg-[#eee] pointer-events-none" viewBox="0 0 16 20"><path fill="#000" d="M4 8h9l-4 5z"/></svg>
          </div>
        </div>
        <svg id="lineal" class="block w-full border-t-2 border-b-2 border-[#a8a8a8] bg-white font-['Liberation_Sans',sans-serif]" viewBox="0 0 940 34" font-size="11" fill="#445"></svg>
        <div class="flex">
          <div class="flex-1 bg-[#8d90b8] pt-[5px] pl-3 pr-2">
            <article class="flex bg-white border-2 border-[#444] border-t-[#777] border-r-[5px] border-r-black border-b-[5px] border-b-black font-['Liberation_Sans',sans-serif]">
              <div class="w-[127px] bg-[#f2f5fe]"></div>
              <div id="bericht-vc" class="flex-1 pt-4 pb-[35px] pl-[70px] pr-[22px]"></div>
              <div class="w-[40px] bg-[#f2f5fe]"></div>
            </article>
          </div>
          <div class="w-[21px] bg-[#f0f0f0] flex flex-col items-center border-r border-[#ccc]">
            <svg class="mt-1 w-2 h-3" viewBox="0 0 8 12"><path fill="#444" d="M4 3l3 6H1z"/></svg>
            <div class="mt-[130px] w-4 h-[18px] rounded-sm border border-[#aaa] bg-linear-to-r from-white to-[#d5d5d5]"></div>
            <svg class="mt-auto mb-1 w-2 h-3" viewBox="0 0 8 12"><path fill="#444" d="M4 9l3-6H1z"/></svg>
          </div>
        </div>
        <div class="h-[20px] flex items-center bg-[#efefef] border-b-2 border-[#aaa] pr-[26px]">
          <svg class="ml-[7px] w-2 h-3" viewBox="0 0 8 12"><path fill="#333" d="M6 1v10L2 6z"/></svg>
          <div class="ml-[11px] w-4 h-[17px] rounded-sm border border-[#bbb] bg-linear-to-b from-white to-[#c9c9cf]"></div>
          <svg class="ml-auto w-2 h-3" viewBox="0 0 8 12"><path fill="#333" d="M2 1v10l4-5z"/></svg>
        </div>
        <footer class="h-[28px] pt-1 flex items-center leading-5 whitespace-nowrap text-[14px]">
          <span class="flex-1 h-[22px] border-t-2 border-l border-[#d5d5d5] pl-[9px]">Lizenz: Veit Christoph GmbH</span>
          <span class="w-[60px] pl-[10px]">Status</span><span class="w-[54px] h-[22px] border-t-2 border-l border-[#d5d5d5] text-center">TEXT</span>
          <span class="w-[58px] pl-[5px]">Modus</span><span class="w-[54px] h-[22px] border-t-2 border-l border-[#d5d5d5] text-center">EINF</span>
          <span class="w-[80px] pl-[33px]">Seite</span><span class="w-[88px] h-[22px] border-t-2 border-l border-[#d5d5d5] text-center">2/11</span>
          <span class="w-[30px] pl-[5px]">ZE</span><span class="w-[48px] h-[22px] border-t-2 border-l border-[#d5d5d5] text-center">4</span>
          <span class="w-[31px] pl-[7px]">SP</span><span class="w-[50px] h-[22px] border-t-2 border-l border-[#d5d5d5] text-center">1</span>
          <svg class="ml-1 w-4 h-5" viewBox="0 0 16 20"><path stroke="#aaa" d="M0 20L16 2M4 20L16 7M8 20l8-8M12 20l4-4"/></svg>
        </footer>
      </div>
    </section>
  </main>

  <script>
    // Koordinaten der 16 Knoten
    const knoten = [
      ["-3.000", "0.000", "0.000"], ["-3.000", "0.000", "-4.000"], ["-3.000", "0.000", "-9.000"],
      ["0.000", "-3.000", "0.000"], ["0.000", "-3.000", "-4.000"], ["0.000", "-3.000", "-9.000"],
      ["3.000", "0.000", "0.000"], ["3.000", "0.000", "-4.000"], ["3.000", "0.000", "-9.000"],
      ["0.000", "3.000", "0.000"], ["0.000", "3.000", "-4.000"], ["0.000", "3.000", "-9.000"],
      ["-0.500", "0.000", "-2.000"], ["0.500", "0.000", "-2.000"], ["0.000", "-0.500", "-2.000"], ["0.000", "0.500", "-2.000"]
    ];

    const linien = [
      ["Polyline", "1,2", "4.000", "Z"], ["Polyline", "2,3", "5.000", "Z"], ["Polyline", "4,5", "4.000", "Z"], ["Polyline", "5,6", "5.000", "Z"],
      ["Polyline", "7,8", "4.000", "Z"], ["Polyline", "8,9", "5.000", "Z"], ["Polyline", "10,11", "4.000", "Z"], ["Polyline", "11,12", "5.000", "Z"],
      ["Arc", "2,11,8", "9.425", "XY"], ["Arc", "8,5,2", "9.425", "XY"], ["Arc", "3,12,9", "9.425", "XY"], ["Arc", "9,6,3", "9.425", "XY"],
      ["Arc", "13,15,14", "1.571", "XY"], ["Arc", "14,16,13", "1.571", "XY"], ["Polyline", "2,13", "3.202", "XZ"], ["Polyline", "14,8", "3.202", "XZ"]
    ];

    const tabellen = {
      nodes: {
        breiten: [40, 65, 55, 78, 60, 60, 60, 110],
        kopf: [["Node", "", "Reference", "Coordinate", "Node coordinates*3", ""], ["No.", "Node type", "Node", "System", "X [m]", "Y [m]", "Z [m]", "Comment"]],
        art: "clclrrrl",
        zeilen: knoten.map((k, i) => [i + 1, "Standard", "-", "Cartesian", ...k, ""])
      },
      lines: {
        breiten: [40, 72, 166, 60, 59, 131],
        kopf: [["Line", "", "", "Line Length", "", ""], ["No.", "Line Type", "Nodes No.", "l [m]", "", "Comment"]],
        art: "cllrcl",
        zeilen: linien.map((l, i) => [i + 1, ...l, ""])
      },
      materials: {
        breiten: [40, 131, 60, 59, 60, 60, 67, 51],
        kopf: [["Material", "Material", "E-Modulus", "G-Modulus", "Poisson's R.", "Sp. Weight", "Coeff. Thermal", "Saf. Factor"],
               ["No.", "Description", "E [kN/cm²]", "G [kN/cm²]", "ν [-]", "γ [kN/m³]", "α [1/°C]", "γM [-]"]],
        art: "clrrrrrr",
        zeilen: [[2, "Steel S 235 JR", "21000.00", "8100.00", "0.300", "78.50", "1.2000E-05", "1.100"]]
      }
    };

    const ausrichtung = { c: "text-center", l: "text-left pl-[5px]", r: "text-right pr-[2px]" };

    function tabelle(t, stil) {
      const cols = t.breiten.map(b => `<col style="width:${b / 5.28}%">`).join("");
      const kopf = t.kopf.map((zeile, r) => `<tr class="${r ? stil.kopf2 : stil.kopf}">` + zeile.map(z => {
        const [text, span] = z.split("*");
        return `<th colspan="${span || 1}" class="p-0 align-top font-normal bg-[#d5d5d5] border-r border-[#555] whitespace-nowrap ${r ? "border-b-2" : ""}">${text}</th>`;
      }).join("") + "</tr>").join("");
      const rumpf = t.zeilen.map(zeile => `<tr class="${stil.zeile} even:bg-[#e1e1e1]">` + zeile.map((z, i) =>
        `<td class="p-0 border-r border-[#555] ${ausrichtung[t.art[i]]} ${i ? "" : "bg-[#d8d8d8]"}">${z}</td>`).join("") + "</tr>").join("");
      return `<table class="w-full table-fixed border-separate border-spacing-0 border-t-[3px] border-[#8d8a8e] text-[9px] text-[#222]"><colgroup>${cols}</colgroup><thead>${kopf}</thead><tbody>${rumpf}</tbody></table>`;
    }

    function titel(text) {
      return `<h4 class="relative h-3 pl-[6px] text-[13px] leading-[13px] font-bold text-[#222]"><i class="absolute -left-[4px] top-[3px] w-[6px] h-[7px] bg-black"></i>${text}</h4>`;
    }

    function bericht(id, stil) {
      const links = stil.links;
      document.getElementById(id).innerHTML = `
        <div class="flex">
          <div class="${links} relative text-[9px] ${stil.achsen}">
            <span class="block pl-1 leading-[10px]">Cartesian</span>
            <svg class="w-[100px] h-[64px] ml-2"><use href="#achsen"/></svg>
          </div>
          <div class="flex-1 border-l-2 border-[#555] ${stil.oben}">${titel("1.1 NODES")}${tabelle(tabellen.nodes, stil)}</div>
        </div>
        <div class="flex"><div class="${links}"></div><div class="flex-1 border-l-2 border-[#555] ${stil.mesh}">${titel("MESH")}</div></div>
        <figure class="relative border-2 border-b-[3px] border-[#555] border-b-[#a09da0]">
          <svg class="block w-full" viewBox="0 0 662 296"><use href="#silo"/></svg>
          <figcaption class="absolute inset-x-[2px] top-[1px] flex justify-between text-[8px] leading-[11px]"><span>LC1: Eigengewicht</span><span>Isometric</span></figcaption>
        </figure>
        <div class="flex"><div class="${links}"></div><div class="flex-1 border-l-2 border-[#555] ${stil.unten}">
          ${titel("1.2 LINES")}${tabelle(tabellen.lines, stil)}
          <div class="h-[30px]"></div>
          ${titel("1.3 MATERIALS")}${tabelle(tabellen.materials, stil)}
        </div></div>`;
    }

    bericht("bericht-import", { links: "w-[132px]", achsen: "pt-[16px]", oben: "pt-[9px]", mesh: "pt-[26px]", unten: "pt-[31px] pb-[33px]", kopf: "h-3 leading-[12px]", kopf2: "h-4 leading-[12px]", zeile: "h-[9px] leading-[9px] nth-[4n]:h-[10px]" });
    bericht("bericht-vc", { links: "w-[126px]", achsen: "pt-[18px]", oben: "pt-[11px]", mesh: "pt-[23px]", unten: "pt-[30px] pb-[35px]", kopf: "h-[11px] leading-[11px]", kopf2: "h-[15px] leading-[11px]", zeile: "h-[9px] leading-[8px] nth-[5n]:h-[8px]" });

    function leiste(id, namen) {
      document.getElementById(id).innerHTML = namen.split(" ").map(n => n === "|"
        ? `<i class="w-[7px] flex justify-center"><span class="w-px h-6 bg-[#bbb]"></span></i>`
        : `<button aria-label="${n}" class="w-[26px] h-6 flex items-center justify-center"><svg class="w-[18px] h-[20px]" viewBox="0 0 16 16" preserveAspectRatio="none"><use href="#i-${n}" width="16" height="16"/></svg></button>`).join("");
    }

    leiste("leiste-import", "tabelle schere-rot | import import2 | zurueck vor | lupe-minus lupe-plus lupe-rot | haus1 haus2 | a |");
    leiste("leiste-haupt", "neu oeffnen speichern | drucken vorschau abc | schere kopieren einfuegen undo | fernglas a-klammer gitter formen | rahmen fenster herz | rechner | pinsel stapel summe wurzel | haken | kugel | hilfe");
    leiste("leiste-format", "| links mitte rechts block | fett kursiv unter h durch | hoch tief | linie1 linie2 linie3 | farbe | ordner | absatz | leer |");

    // Lineal: 42.4 Einheiten je Zentimeter, Nullpunkt bei 142
    function lineal() {
      let s = `<path fill="#f2f5fe" d="M0 0h940v16H0zM2 20h134v14H2zM866 20h74v14h-74z"/><path fill="#a3a0a8" d="M0 16h940v3H0z"/>`;
      for (let i = -13; i < 76; i++) {
        const x = 142 + i * 10.6;
        const y = i % 4 === 0 ? 3 : i % 2 === 0 ? 9 : 13;
        s += `<path stroke="#333" d="M${x} ${y}V17"/>`;
        if (i % 4 === 0) s += `<text x="${x + 2}" y="12">${i / 4}</text>`;
      }
      for (let i = 0; i < 11; i++) s += `<path stroke="#222" stroke-width="2" d="M${205 + i * 63.7} 19v4m-3 0h6"/>`;
      s += `<path fill="#111" d="M205 22l6 4-6 7zM862 22v11l-6-5z"/>`;
      document.getElementById("lineal").innerHTML = s;
    }
    lineal();
  </script>

</body>
</html>
